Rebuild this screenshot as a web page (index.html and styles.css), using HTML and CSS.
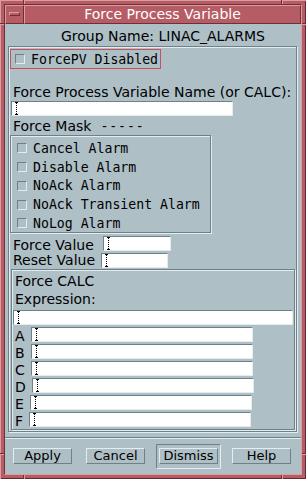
FILE: index.html
```html
<!DOCTYPE html>
<html lang="en">
<head>
    <meta charset="UTF-8">
    <title>Force Process Variable</title>
    <link rel="stylesheet" href="styles.css">
</head>
<body>

<div class="window">
    <div class="frame-inner">
        <div class="titlebar">
            <div class="menu-button"><span class="menu-glyph"></span></div>
            <div class="title">Force Process Variable</div>
        </div>
        <div class="client">
            <div class="group-name">Group Name: LINAC_ALARMS</div>
            <div class="panel">
                <div class="toggle toggle-focus"><span class="check"></span>ForcePV Disabled</div>
                <div class="label label-pv">Force Process Variable Name (or CALC):</div>
                <div class="field field-pv"><svg class="caret" width="5" height="13" viewBox="0 0 5 13"><path d="M1 .5h3M1 12.5h3" stroke="#000"/><path d="M2.5 1v11" stroke="#000" stroke-dasharray="1 1"/></svg></div>
                <div class="label label-mask">Force Mask<span class="mask-value">-----</span></div>
                <div class="mask-box">
                    <div class="toggle"><span class="check"></span>Cancel Alarm</div>
                    <div class="toggle"><span class="check"></span>Disable Alarm</div>
                    <div class="toggle"><span class="check"></span>NoAck Alarm</div>
                    <div class="toggle"><span class="check"></span>NoAck Transient Alarm</div>
                    <div class="toggle"><span class="check"></span>NoLog Alarm</div>
                </div>
                <div class="value-row">
                    <span class="value-label">Force Value</span>
                    <div class="field field-force"><svg class="caret" width="5" height="13" viewBox="0 0 5 13"><path d="M1 .5h3M1 12.5h3" stroke="#000"/><path d="M2.5 1v11" stroke="#000" stroke-dasharray="1 1"/></svg></div>
                </div>
                <div class="value-row value-row-reset">
                    <span class="value-label">Reset Value</span>
                    <div class="field field-reset"><svg class="caret" width="5" height="13" viewBox="0 0 5 13"><path d="M1 .5h3M1 12.5h3" stroke="#000"/><path d="M2.5 1v11" stroke="#000" stroke-dasharray="1 1"/></svg></div>
                </div>
                <div class="calc-box">
                    <div class="label calc-title">Force CALC</div>
                    <div class="label calc-expr-label">Expression:</div>
                    <div class="field field-expr"><svg class="caret" width="5" height="13" viewBox="0 0 5 13"><path d="M1 .5h3M1 12.5h3" stroke="#000"/><path d="M2.5 1v11" stroke="#000" stroke-dasharray="1 1"/></svg></div>
                    <div class="calc-row">
                        <span class="calc-letter">A</span>
                        <div class="field field-calc"><svg class="caret" width="5" height="13" viewBox="0 0 5 13"><path d="M1 .5h3M1 12.5h3" stroke="#000"/><path d="M2.5 1v11" stroke="#000" stroke-dasharray="1 1"/></svg></div>
                    </div>
                    <div class="calc-row">
                        <span class="calc-letter">B</span>
                        <div class="field field-calc"><svg class="caret" width="5" height="13" viewBox="0 0 5 13"><path d="M1 .5h3M1 12.5h3" stroke="#000"/><path d="M2.5 1v11" stroke="#000" stroke-dasharray="1 1"/></svg></div>
                    </div>
                    <div class="calc-row">
                        <span class="calc-letter">C</span>
                        <div class="field field-calc"><svg class="caret" width="5" height="13" viewBox="0 0 5 13"><path d="M1 .5h3M1 12.5h3" stroke="#000"/><path d="M2.5 1v11" stroke="#000" stroke-dasharray="1 1"/></svg></div>
                    </div>
                    <div class="calc-row">
                        <span class="calc-letter">D</span>
                        <div class="field field-calc"><svg class="caret" width="5" height="13" viewBox="0 0 5 13"><path d="M1 .5h3M1 12.5h3" stroke="#000"/><path d="M2.5 1v11" stroke="#000" stroke-dasharray="1 1"/></svg></div>
                    </div>
                    <div class="calc-row">
                        <span class="calc-letter">E</span>
                        <div class="field field-calc"><svg class="caret" width="5" height="13" viewBox="0 0 5 13"><path d="M1 .5h3M1 12.5h3" stroke="#000"/><path d="M2.5 1v11" stroke="#000" stroke-dasharray="1 1"/></svg></div>
                    </div>
                    <div class="calc-row">
                        <span class="calc-letter">F</span>
                        <div class="field field-calc"><svg class="caret" width="5" height="13" viewBox="0 0 5 13"><path d="M1 .5h3M1 12.5h3" stroke="#000"/><path d="M2.5 1v11" stroke="#000" stroke-dasharray="1 1"/></svg></div>
                    </div>
                </div>
            </div>
            <div class="separator"></div>
            <div class="actions">
                <div class="action-slot"><button class="action">Apply</button></div>
                <div class="action-slot"><button class="action">Cancel</button></div>
                <div class="action-slot action-default"><button class="action">Dismiss</button></div>
                <div class="action-slot"><button class="action">Help</button></div>
            </div>
        </div>
    </div>
    <span class="mark mark-top-left"></span>
    <span class="mark mark-top-right"></span>
    <span class="mark mark-bottom-left"></span>
    <span class="mark mark-bottom-right"></span>
    <span class="mark mark-left-top"></span>
    <span class="mark mark-left-bottom"></span>
    <span class="mark mark-right-top"></span>
    <span class="mark mark-right-bottom"></span>
</div>

</body>
</html>
```

FILE: styles.css
```css
body {
    margin: 0;
    background-color: #aebfc6;
    font-family: "DejaVu Sans", sans-serif;
    color: #000;
}
.window {
    position: relative;
    width: 306px;
    height: 479px;
    box-sizing: border-box;
    padding: 4px;
    background-color: #b55c64;
    box-shadow: inset 1px 1px 0 #dc9ca1, inset -1px -1px 0 #5e2b30;
}
.frame-inner {
    height: 100%;
    box-sizing: border-box;
    border: 1px solid;
    border-color: #6e3036 #dc9ca1 #dc9ca1 #6e3036;
    display: flex;
    flex-direction: column;
}
.titlebar {
    display: flex;
    height: 19px;
}
.menu-button {
    width: 19px;
    box-sizing: border-box;
    border: 1px solid;
    border-color: #dc9ca1 #6e3036 #6e3036 #dc9ca1;
    display: flex;
    align-items: center;
    justify-content: center;
}
.menu-glyph {
    width: 11px;
    height: 4px;
    margin-top: -1px;
    box-sizing: border-box;
    border: 1px solid;
    border-color: #dc9ca1 #6e3036 #6e3036 #dc9ca1;
}
.title {
    flex: 1;
    box-sizing: border-box;
    border: 1px solid;
    border-color: #dc9ca1 #6e3036 #6e3036 #dc9ca1;
    color: #fff;
    font-size: 14px;
    line-height: 17px;
    text-align: center;
}
.client {
    flex: 1;
    background-color: #aebfc6;
}
.group-name {
    margin-top: 4px;
    padding-left: 20px;
    font-size: 14px;
    line-height: 17px;
    text-align: center;
}
.panel {
    height: 386px;
    margin: 1px 4px 0 3px;
    box-sizing: border-box;
    border: 1px solid #6f8188;
    box-shadow: inset 1px 1px 0 #e4ecef, 1px 1px 0 #e4ecef;
    display: flex;
    flex-direction: column;
    align-items: flex-start;
}
.label {
    font-size: 14px;
    line-height: 17px;
    white-space: nowrap;
}
.toggle {
    display: flex;
    align-items: center;
    gap: 6px;
    font-family: "DejaVu Sans Mono", monospace;
    font-size: 13.2px;
    white-space: nowrap;
}
.toggle-focus {
    width: 151px;
    height: 20px;
    margin: 2px 0 0 1px;
    padding-left: 4px;
    box-sizing: border-box;
    border: 1px solid #c6505b;
}
.check {
    width: 10px;
    height: 10px;
    box-sizing: border-box;
    border: 1px solid;
    border-color: #6f8188 #e4ecef #e4ecef #6f8188;
    flex: none;
}
.label-pv {
    margin-top: 15px;
    padding-left: 4px;
}
.field {
    height: 15px;
    box-sizing: border-box;
    background-color: #fff;
    border: 1px solid;
    border-color: #6f8188 #e4ecef #e4ecef #6f8188;
    display: flex;
    align-items: center;
    padding-left: 2px;
}
.caret {
    display: block;
    flex: none;
}
.field-pv {
    width: 222px;
    margin-left: 2px;
}
.label-mask {
    margin-top: 2px;
    padding-left: 4px;
}
.mask-value {
    margin-left: 9px;
    font-family: "DejaVu Sans Mono", monospace;
    font-size: 13.2px;
    letter-spacing: 0.9px;
}
.mask-box {
    width: 201px;
    height: 98px;
    margin-left: 1px;
    padding: 3px 0 0 6px;
    box-sizing: border-box;
    border: 1px solid #6f8188;
    box-shadow: inset 1px 1px 0 #e4ecef, 1px 1px 0 #e4ecef;
}
.mask-box .toggle {
    height: 18.75px;
}
.value-row {
    display: flex;
    align-items: flex-start;
    height: 17px;
    margin-top: 3px;
    padding-left: 4px;
}
.value-label {
    width: 90px;
    margin-top: 1px;
    font-size: 14px;
    line-height: 17px;
    white-space: nowrap;
}
.value-row-reset {
    height: 16px;
    margin-top: 0;
}
.value-row-reset .value-label {
    width: 88px;
    margin-top: 0;
    line-height: 15px;
}
.field-force {
    width: 68px;
}
.field-reset {
    width: 67px;
}
.calc-box {
    align-self: stretch;
    height: 161px;
    margin: 0 1px 0 2px;
    box-sizing: border-box;
    border: 1px solid #6f8188;
    box-shadow: inset 1px 1px 0 #e4ecef, 1px 1px 0 #e4ecef;
}
.calc-title {
    margin-top: 3px;
    padding-left: 3px;
}
.calc-expr-label {
    margin-top: 1px;
    padding-left: 3px;
}
.field-expr {
    width: 280px;
    margin: 2px 0 0 1px;
}
.calc-row {
    display: flex;
    align-items: flex-start;
    gap: 6px;
    height: 17px;
    padding-left: 3px;
}
.field-expr + .calc-row {
    margin-top: 2px;
}
.calc-letter {
    margin-top: 1px;
    font-size: 14px;
    line-height: 17px;
}
.field-calc {
    width: 222px;
}
.separator {
    height: 2px;
    margin-top: 5px;
    box-sizing: border-box;
    border-top: 1px solid #6f8188;
    border-bottom: 1px solid #e4ecef;
}
.actions {
    display: flex;
    gap: 8px;
    margin-top: 5px;
    padding-left: 5px;
}
.action-slot {
    width: 65px;
    height: 25px;
    box-sizing: border-box;
    border: 1px solid transparent;
    display: flex;
    align-items: center;
    justify-content: center;
}
.action-default {
    border-color: #6f8188 #e4ecef #e4ecef #6f8188;
}
.action {
    width: 59px;
    height: 16px;
    margin-top: -1px;
    padding: 0;
    box-sizing: border-box;
    border: 1px solid;
    border-color: #e4ecef #6f8188 #6f8188 #e4ecef;
    background-color: #aebfc6;
    font-family: "DejaVu Sans", sans-serif;
    font-size: 13px;
    line-height: 14px;
    color: #000;
}
.mark {
    position: absolute;
    background-color: #dc9ca1;
}
.mark-top-left, .mark-top-right, .mark-bottom-left, .mark-bottom-right {
    width: 1px;
    height: 4px;
    border-left: 1px solid #6e3036;
}
.mark-top-left { left: 23px; top: 0; }
.mark-top-right { left: 281px; top: 0; }
.mark-bottom-left { left: 23px; bottom: 0; }
.mark-bottom-right { left: 281px; bottom: 0; }
.mark-left-top, .mark-left-bottom, .mark-right-top, .mark-right-bottom {
    width: 4px;
    height: 1px;
    border-top: 1px solid #6e3036;
}
.mark-left-top { left: 0; top: 23px; }
.mark-left-bottom { left: 0; top: 453px; }
.mark-right-top { right: 0; top: 23px; }
.mark-right-bottom { right: 0; top: 453px; }
```
